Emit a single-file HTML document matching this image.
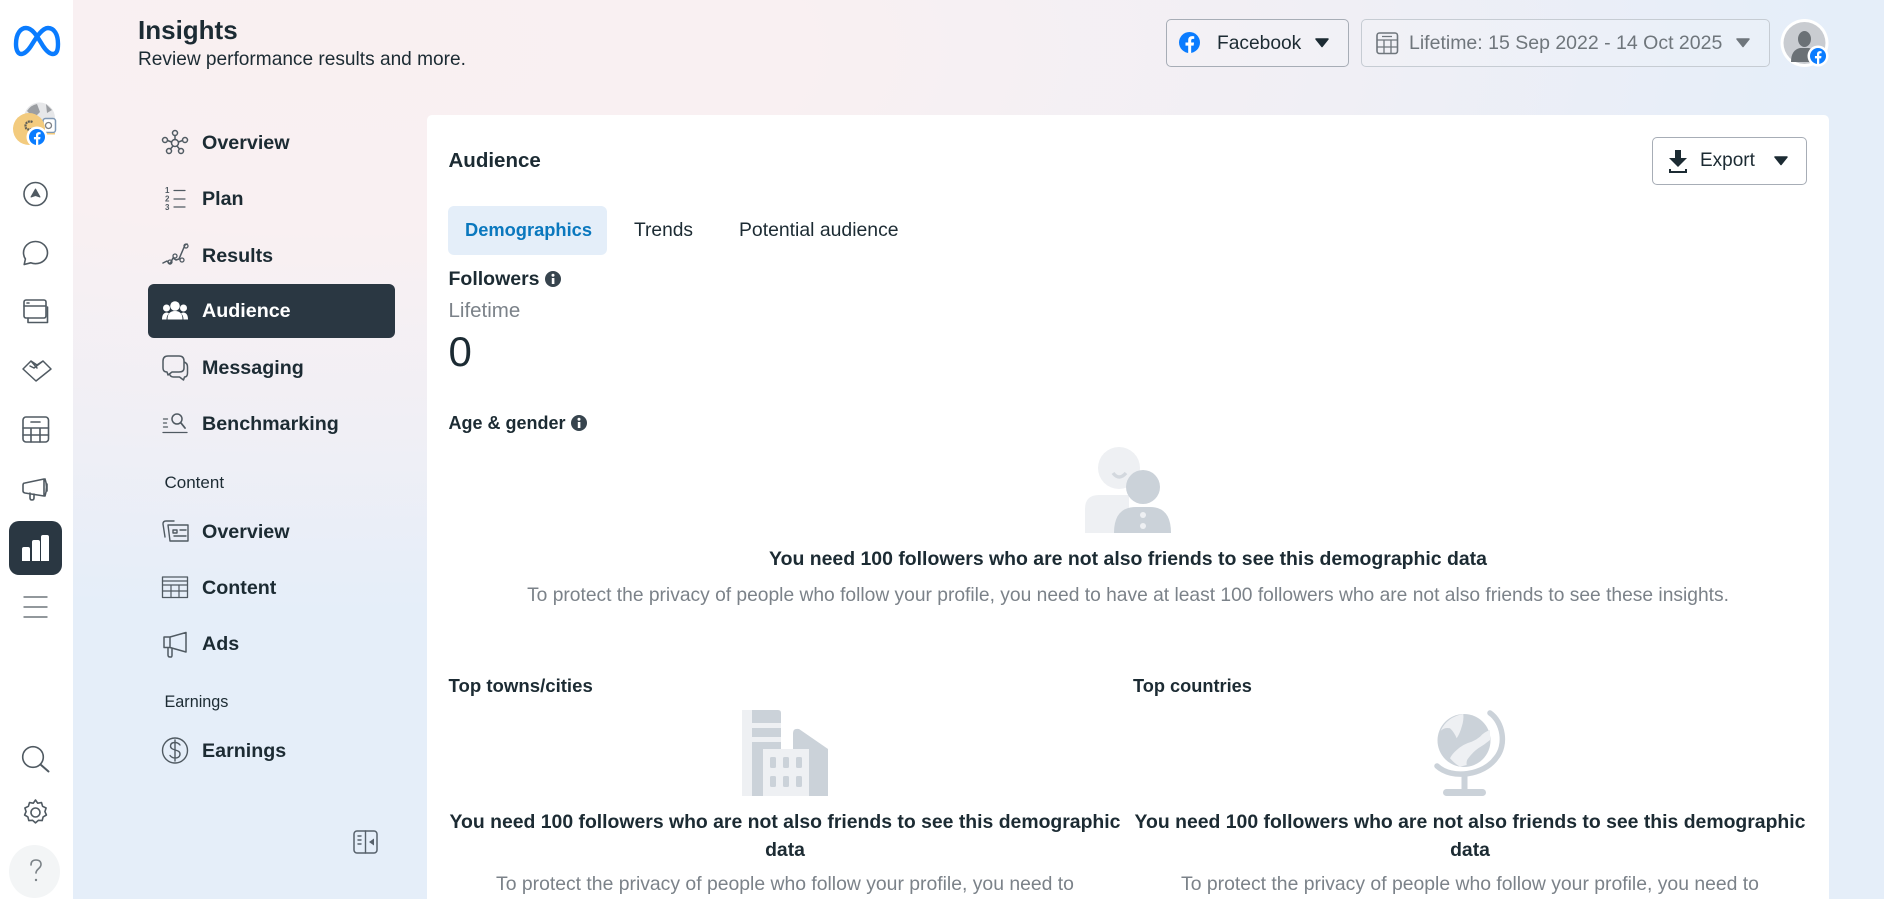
<!DOCTYPE html>
<html lang="en"><head><meta charset="utf-8"><title>Insights</title>
<style>
html,body{margin:0;padding:0;width:1884px;height:899px;overflow:hidden;background:#fff}
body{position:relative;font-family:"Liberation Sans",sans-serif;color:#1c2b33}
#bg{position:absolute;left:73px;top:0;width:1811px;height:899px;background:radial-gradient(1500px 560px at 250px 50px,#f9f0f1 0%,#f9f0f2 32%,#f0eff5 68%,#e5eef9 100%)}
.box{position:absolute;box-sizing:border-box}
.t{position:absolute;white-space:nowrap;line-height:30px;height:30px}
.b{font-weight:700}
.c{text-align:center}
svg#ic{position:absolute;left:0;top:0;width:1884px;height:899px}
svg .s{fill:none;stroke:#505a62;stroke-width:1.6;stroke-linecap:round;stroke-linejoin:round}
</style></head><body>
<div id="bg"></div>
<div class="box" style="left:427px;top:115px;width:1402px;height:800px;background:#fff;border-radius:5px"></div>
<div class="box" style="left:148px;top:284px;width:247px;height:54px;background:#2a3742;border-radius:6px"></div>
<div class="box" style="left:9px;top:521px;width:53px;height:54px;background:#2a3742;border-radius:10px"></div>
<div class="box" style="left:9px;top:845px;width:51px;height:53px;background:#f3f5f6;border-radius:50%"></div>
<div class="box" style="left:1166px;top:19px;width:183px;height:48px;border:1px solid #a7adb6;border-radius:5px;background:rgba(255,255,255,.12)"></div>
<div class="box" style="left:1361px;top:19px;width:409px;height:48px;border:1px solid #c6ccd3;border-radius:5px;background:rgba(255,255,255,.12)"></div>
<div class="box" style="left:1652px;top:137px;width:155px;height:48px;border:1px solid #a7adb6;border-radius:5px;background:#fff"></div>
<div class="box" style="left:448px;top:206px;width:159px;height:49px;background:#e4eef9;border-radius:6px"></div>

<svg id="ic" viewBox="0 0 1884 899" xmlns="http://www.w3.org/2000/svg">
<defs>
<symbol id="fb" viewBox="0 0 24 24"><circle cx="12" cy="12" r="12" fill="#0a7cff"/><path fill="#fff" d="M16.7 15.5l.5-3.500h-3.300V9.800c0-1 .5-1.900 2-1.900h1.500v-3S16.200 4.700 15 4.700c-2.700 0-4.500 1.600-4.500 4.600V12H7.400v3.500h3.100V24h3.400v-8.500z"/></symbol>
</defs>
<path d="M16 44C16 33 21 28 26 28C33 28 38 38 43 46C47 52 50 54 53 54C57 54 58 50 58 44C58 34 54 28 48 28C42 28 36 38 31 46C27 52 24 54 21 54C18 54 16 50 16 44Z" fill="none" stroke="#0a7cff" stroke-width="4.400"/>
<circle cx="39.500" cy="118" r="15.500" fill="#e6e7e9"/><path d="M27 111q4-6 10-7l3 8-6 6zM46 104l6 6-5 3z" fill="#9b9ea2"/>
<rect x="43" y="118.500" width="12.500" height="14" rx="2.500" fill="#fff" stroke="#7f98b4" stroke-width="1.500"/><circle cx="48.500" cy="125.500" r="3" fill="none" stroke="#7d8186" stroke-width="1.300"/>
<path d="M44 133h11v1.500h-11z" fill="#f3cb7e"/>
<circle cx="29" cy="129" r="16" fill="#f3cb7e"/><path d="M32.500 122c-4-1.500-7 .5-7 4s2.500 4 6.500 3" fill="none" stroke="#5f5d55" stroke-width="2.200" stroke-dasharray="2 .7"/>
<circle cx="37" cy="137" r="10.500" fill="#fff"/><use href="#fb" x="29" y="129" width="16" height="16"/>

<g class="s">
<circle cx="35.500" cy="194" r="11.500"/>
<path d="M35.500 189l-4.500 8 4.500-1.500 4.500 1.500z" fill="#505a62" stroke-width="1"/>
<path d="M35.500 241.500c6.800 0 12 5 12 11.200s-5.200 11-12 11c-1.700 0-3.300-.3-4.800-.9l-6.500 1.700 1.200-5.500c-1.200-1.800-1.900-4-1.900-6.300 0-6.200 5.200-11.200 12-11.200z"/>
<rect x="24" y="300" width="22" height="18" rx="2"/><path d="M24 306h22M27 303h2M28 318v4.500h19.500v-15.500"/>
<path d="M23 369l8-8 6 4 6-4 8 8-15 12zM31 361l6 7M43 361l-9 7-4-2" stroke-width="1.500"/>
<rect x="23" y="417" width="25.500" height="25" rx="3"/><path d="M23 428h25.500M23 435h25.500M31 428v14M40 428v14M31 422h9"/>
<path d="M23 485q0-2 2-2l19-4v17l-19-3q-2-.5-2-2zM45 479q3 8 0 17M30 493v5q0 2 2 2t2-2v-4M47 484v7"/>
<path d="M24 597h23M24 607h23M24 617h23" stroke-width="1.300"/>
<circle cx="33" cy="757" r="10.300"/><path d="M40.500 764.500l8 7" stroke-width="2"/>
<circle cx="35.500" cy="812.500" r="4.500"/><path d="M35.500 800l2.200 3.200 3.800-.6 1.100 3.700 3.500 1.700-1.200 3.600 1.500 3.400-3.300 1.900-.9 3.700-3.800-.3-2.900 2.600-2.900-2.600-3.800.3-.9-3.700-3.300-1.900 1.500-3.400-1.200-3.600 3.500-1.700 1.100-3.700 3.800.6z"/>
<path d="M31 865q0-5 5-5t5 4.500c0 4-5 4.500-5 8.500" stroke="#7b8287"/>
</g>
<circle cx="36" cy="880" r="1.200" fill="#7b8287"/>
<path fill="#fff" d="M22 549a2 2 0 0 1 2-2h4a2 2 0 0 1 2 2v12h-8zM32 542a2 2 0 0 1 2-2h4a2 2 0 0 1 2 2v19h-8zM41 537a2 2 0 0 1 2-2h4a2 2 0 0 1 2 2v24h-8z"/>

<g class="s">
<g style="stroke-width:1.500"><circle cx="175" cy="143" r="3.500"/><circle cx="175" cy="133" r="2.500"/><circle cx="165" cy="140" r="2.500"/><circle cx="185" cy="140" r="2.500"/><circle cx="169" cy="151" r="2.500"/><circle cx="181" cy="151" r="2.500"/><path d="M175 135.500v4M167.500 140.500l4 1.500M182.500 140.500l-4 1.500M170.500 149l2.500-3M179.500 149l-2.500-3"/></g>
<path d="M174 190.500h11M174 199h11M174 207h11" style="stroke-width:1.200"/>
<path d="M163 263l4-2 3 3 3-6 3 2 3-1 6-14 2-1" style="stroke-width:1.500"/><circle cx="170" cy="262" r="2" style="stroke-width:1.300"/><circle cx="175" cy="256" r="2" style="stroke-width:1.300"/><circle cx="182" cy="260" r="2" style="stroke-width:1.300"/><circle cx="186" cy="246" r="2" style="stroke-width:1.300"/>
<path d="M168 356h11q5 0 5 5v7q0 4-5 4h-7l-4 3-1-3q-4 0-4-4v-7q0-5 5-5zM184 362q3.500 1 3.500 5v6q0 4-3 4l-1 3-4-3h-6q-3 0-4-3" style="stroke-width:1.500"/>
<path d="M163.500 419h4M163.500 423h3M163.500 427h4M163 432.500h24" style="stroke-width:1.300"/><circle cx="177" cy="419" r="5" style="stroke-width:1.500"/><path d="M181 423l4 5" style="stroke-width:1.800"/>
<path d="M174 521h-8q-3 0-3 3l2 13M168 525h20v16h-18zM173 530h4v3h-4zM180 530h6M174 536h12" style="stroke-width:1.400"/>
<rect x="162.500" y="577" width="25" height="20.500" style="stroke-width:1.300"/><path d="M162.500 581h25M162.500 585h25M162.500 591h25M171 585v12.500M179 585v12.500" style="stroke-width:1.200"/>
<path d="M164 637h6l16-4.500v19.500l-16-4.500h-6zM170 637v10.500M168 648v7q0 2 2 2h1q1 0 1-2v-7" style="stroke-width:1.500"/>
<circle cx="175" cy="750.500" r="12.500" style="stroke-width:1.400"/><path d="M180 745q-2-2.500-5-2.500-4.500 0-4.500 3.500c0 5 9.500 3 9.500 8 0 3-2.500 4-5 4q-3 0-5-2.500M175 740v21" style="stroke-width:1.400"/>
<rect x="354" y="831" width="23" height="22" rx="3" style="stroke-width:1.500;stroke:#56606a"/><path d="M365.500 831v22M358 836h3M358 840h3M358 844h3" style="stroke-width:1.400;stroke:#56606a"/>
</g>
<text x="165" y="193" font-family="Liberation Sans" font-weight="700" font-size="8" fill="#505a62">1</text>
<text x="165" y="201.500" font-family="Liberation Sans" font-weight="700" font-size="8" fill="#505a62">2</text>
<text x="165" y="210" font-family="Liberation Sans" font-weight="700" font-size="8" fill="#505a62">3</text>
<path d="M374 838.500v7l-5-3.500z" fill="#56606a"/>

<g fill="#fff">
<circle cx="175" cy="306" r="4.800"/><circle cx="166.500" cy="308" r="3.500"/><circle cx="183.500" cy="308" r="3.500"/>
<path d="M167.500 319.500q0-8.500 7.500-8.500t7.500 8.500zM162 319.500q0-6.500 4.500-7 1.500 0 2.500 1-2.500 2-2.500 6zM188 319.500q0-6.500-4.500-7-1.500 0-2.500 1 2.500 2 2.500 6z"/>
</g>

<use href="#fb" x="1179" y="32" width="21" height="21"/>
<path d="M1316 39h12l-6 7.500z" fill="#1c2b33" stroke="#1c2b33" stroke-width="1.500" stroke-linejoin="round"/>
<rect x="1377" y="33" width="20.500" height="20.500" rx="2.500" fill="none" stroke="#6f767c" stroke-width="1.600"/><path d="M1377 40h20.500M1377 47h20.500M1384 40v13.500M1391 40v13.500M1382 36.500h10" fill="none" stroke="#6f767c" stroke-width="1.300"/>
<path d="M1737 39h12l-6 7.500z" fill="#6f767c" stroke="#6f767c" stroke-width="1.500" stroke-linejoin="round"/>
<circle cx="1804.500" cy="43" r="24" fill="#fff"/><circle cx="1804.500" cy="43" r="21" fill="#c9ccd1"/>
<ellipse cx="1804.500" cy="39" rx="6.500" ry="8" fill="#6b7176"/><path d="M1791 62q0-12 9-14h9q9 2 9 14z" fill="#6b7176"/>
<circle cx="1818" cy="56" r="10.500" fill="#fff"/><use href="#fb" x="1810" y="48" width="16" height="16"/>

<path d="M1675 150h6v8h6l-9 9-9-9h6zM1669 169h2v2h14v-2h2v4h-18z" fill="#1c2b33"/>
<path d="M1775 157h12l-6 7.500z" fill="#1c2b33" stroke="#1c2b33" stroke-width="1.500" stroke-linejoin="round"/>
<circle cx="553" cy="279" r="8" fill="#37444e"/><rect x="551.800" y="278" width="2.600" height="6" fill="#fff"/><circle cx="553" cy="275.200" r="1.500" fill="#fff"/>
<circle cx="579" cy="423" r="8" fill="#37444e"/><rect x="577.800" y="422" width="2.600" height="6" fill="#fff"/><circle cx="579" cy="419.200" r="1.500" fill="#fff"/>

<circle cx="1119" cy="468" r="21" fill="#eef0f3"/>
<path d="M1113 473q6 8 13 0" fill="none" stroke="#d3d8de" stroke-width="3.500"/>
<path d="M1085 533v-24q0-14 14-14h30v38z" fill="#eef0f3"/>
<circle cx="1143" cy="487" r="17" fill="#cbd2d9"/>
<path d="M1114 533q0-26 22-26h14q21 0 21 26z" fill="#cbd2d9"/>
<circle cx="1143" cy="515" r="3" fill="#eef0f3"/><circle cx="1143" cy="526" r="3" fill="#eef0f3"/>

<path d="M742 710h10v86h-10z" fill="#eef0f3"/><path d="M752 710h26q3 0 3 3v83h-29z" fill="#cbd2d9"/>
<rect x="742" y="723" width="39" height="5" fill="#eef0f3"/><rect x="742" y="737" width="39" height="5" fill="#eef0f3"/>
<path d="M793 733q0-5 6-4l29 20v47h-35z" fill="#cbd2d9"/>
<rect x="763" y="749" width="46" height="47" fill="#eef0f3"/>
<g fill="#cbd2d9"><rect x="770" y="757" width="6" height="11" rx="1.500"/><rect x="783" y="757" width="6" height="11" rx="1.500"/><rect x="796" y="757" width="6" height="11" rx="1.500"/><rect x="770" y="776" width="6" height="11" rx="1.500"/><rect x="783" y="776" width="6" height="11" rx="1.500"/><rect x="796" y="776" width="6" height="11" rx="1.500"/></g>

<circle cx="1464" cy="740.500" r="26.500" fill="#cbd2d9"/>
<path d="M1440.700 730.700Q1447 717 1463.300 714Q1464 720 1461.700 726.700Q1460 733 1456.700 738.300Q1454 732 1450 728.300Q1445 727 1440.700 730.700Z" fill="#eef0f3"/>
<path d="M1490 730Q1484 732 1480 736.700Q1476 740 1471.700 741.700Q1463 744 1456.700 750Q1452 754 1450 758.300Q1455 764 1460 766.700L1466.700 765Q1466 761 1468.300 758.300Q1473 752 1478.300 748.300Q1484 745 1490 740Z" fill="#eef0f3"/>
<path d="M1490 713C1503 722 1507 745 1496 758C1484 775 1452 780 1437 766" fill="none" stroke="#cbd2d9" stroke-width="5.500" stroke-linecap="round"/>
<rect x="1461.500" y="772" width="6" height="19" fill="#cbd2d9"/><rect x="1443" y="789" width="43" height="7" rx="3.500" fill="#cbd2d9"/>
</svg>

<div class="t b" style="left:138px;top:15px;font-size:26px">Insights</div>
<div class="t" style="left:138px;top:45px;font-size:19.100px">Review performance results and more.</div>

<div class="t b" style="left:202px;top:128px;font-size:19.700px">Overview</div>
<div class="t b" style="left:202px;top:184px;font-size:19.700px">Plan</div>
<div class="t b" style="left:202px;top:241px;font-size:19.700px">Results</div>
<div class="t b" style="left:202px;top:296px;font-size:19.700px;color:#fff">Audience</div>
<div class="t b" style="left:202px;top:353px;font-size:19.700px">Messaging</div>
<div class="t b" style="left:202px;top:409px;font-size:19.700px">Benchmarking</div>
<div class="t" style="left:164.500px;top:468px;font-size:17px">Content</div>
<div class="t b" style="left:202px;top:517px;font-size:19.700px">Overview</div>
<div class="t b" style="left:202px;top:573px;font-size:19.700px">Content</div>
<div class="t b" style="left:202px;top:629px;font-size:19.700px">Ads</div>
<div class="t" style="left:164.500px;top:687px;font-size:16.200px">Earnings</div>
<div class="t b" style="left:202px;top:736px;font-size:19.700px">Earnings</div>

<div class="t" style="left:1217px;top:29px;font-size:19.200px">Facebook</div>
<div class="t" style="left:1409px;top:28px;font-size:19.500px;color:#6f767c">Lifetime: 15 Sep 2022 - 14 Oct 2025</div>
<div class="t" style="left:1700px;top:146px;font-size:19px">Export</div>

<div class="t b" style="left:448.500px;top:146px;font-size:20.500px">Audience</div>
<div class="t b" style="left:465px;top:215px;font-size:18.300px;color:#0a78be">Demographics</div>
<div class="t" style="left:634px;top:216px;font-size:19.200px">Trends</div>
<div class="t" style="left:739px;top:215px;font-size:19.400px">Potential audience</div>
<div class="t b" style="left:448.500px;top:264px;font-size:19.500px">Followers</div>
<div class="t" style="left:448.500px;top:296px;font-size:20.500px;color:#7b8289">Lifetime</div>
<div class="t" style="left:448.500px;top:337px;font-size:42px">0</div>
<div class="t b" style="left:448.500px;top:408px;font-size:18px">Age &amp; gender</div>

<div class="t b c" style="left:428px;top:544px;width:1400px;font-size:19.450px">You need 100 followers who are not also friends to see this demographic data</div>
<div class="t c" style="left:428px;top:581px;width:1400px;font-size:19.230px;color:#7b8289">To protect the privacy of people who follow your profile, you need to have at least 100 followers who are not also friends to see these insights.</div>

<div class="t b" style="left:448.500px;top:671px;font-size:18.600px">Top towns/cities</div>
<div class="t b" style="left:1133px;top:671px;font-size:18.200px">Top countries</div>

<div class="t b c" style="left:385px;top:807px;width:800px;font-size:19.400px">You need 100 followers who are not also friends to see this demographic</div>
<div class="t b c" style="left:385px;top:835px;width:800px;font-size:19.400px">data</div>
<div class="t c" style="left:385px;top:869px;width:800px;font-size:19.380px;color:#7b8289">To protect the privacy of people who follow your profile, you need to</div>

<div class="t b c" style="left:1070px;top:807px;width:800px;font-size:19.400px">You need 100 followers who are not also friends to see this demographic</div>
<div class="t b c" style="left:1070px;top:835px;width:800px;font-size:19.400px">data</div>
<div class="t c" style="left:1070px;top:869px;width:800px;font-size:19.380px;color:#7b8289">To protect the privacy of people who follow your profile, you need to</div>
</body></html>
